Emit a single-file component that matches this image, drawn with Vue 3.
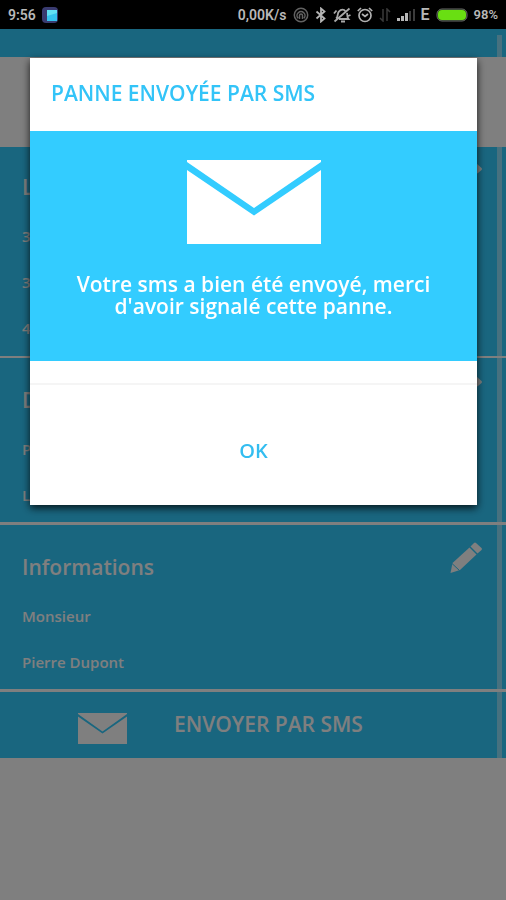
<script setup>
import { ref } from 'vue'

const open = ref(true)
const sections = [
  { title: 'L', rows: ['3', '3', '4'] },
  { title: 'D', rows: ['P', 'L'] },
  { title: 'Informations', rows: ['Monsieur', 'Pierre Dupont'] },
]
</script>

<template>
  <div class="screen">
    <header class="status">
      <span class="clock">9:56</span>
      <svg class="app" viewBox="0 0 16 16" width="16" height="16" aria-hidden="true">
        <rect width="16" height="16" rx="4" fill="#393b70" />
        <rect x="5" y="3" width="10" height="11" fill="#35c3ee" />
        <path d="M5 3h10v3L5 9z" fill="#62e1f3" />
      </svg>
      <span class="speed">0,00K/s</span>
      <svg viewBox="0 0 16 16" width="16" height="16" fill="none" stroke="#626262" stroke-width="1.500" aria-hidden="true">
        <circle cx="8" cy="8" r="6.700" />
        <path d="M5 11.200a4 4 0 1 1 6 0M6.500 12V8.500a1.500 1.500 0 0 1 3 0V12" />
      </svg>
      <svg viewBox="0 0 12 16" width="12" height="16" fill="none" stroke="#b5b5b5" stroke-width="1.800" aria-hidden="true">
        <path d="M1.500 4.500l8 7L6 14.500v-13l3.500 3-8 7" />
      </svg>
      <svg viewBox="0 0 18 16" width="18" height="16" fill="none" stroke="#a9a9a9" stroke-width="1.800" aria-hidden="true">
        <path d="M3 11.500c2.500-1.500 1-5 3-7C8 2 11 2 12.500 4.500M14 6c.5 2-.2 4 1.500 6H6M8 14.500h4M1.500 14.500L16.500 1.500M1 6.500l2.500-3M15 9l2.500-1" />
      </svg>
      <svg viewBox="0 0 16 16" width="16" height="16" fill="none" stroke="#b2b2b2" stroke-width="1.700" aria-hidden="true">
        <circle cx="8" cy="8.500" r="6" />
        <path d="M.8 4l3.200-3M15.200 4L12 1M5 7l3 2.500L11 7" />
      </svg>
      <svg viewBox="0 0 12 14" width="12" height="14" fill="none" stroke="#3a3a3a" stroke-width="1.500" aria-hidden="true">
        <path d="M4 1v12L1 10M8 13V1l3 3" />
      </svg>
      <svg viewBox="0 0 18 14" width="18" height="14" aria-hidden="true">
        <path d="M0 10h3v3H0zM4 8h3v5H4zM8 5h3v8H8z" fill="#b8b8b8" />
        <path d="M12 3h2v10h-2zM16 1h2v12h-2z" fill="#3c3c3c" />
      </svg>
      <span class="net">E</span>
      <svg viewBox="0 0 32 14" width="32" height="14" aria-hidden="true">
        <rect x="1" y="1" width="30" height="12" rx="5" fill="#15300a" stroke="#6c6c6c" />
        <rect x="2" y="2" width="28" height="10" rx="4" fill="#69df12" />
      </svg>
      <span class="level">98%</span>
    </header>

    <main class="page">
      <div class="toolbar"></div>
      <div class="banner"></div>
      <div class="content">
        <section v-for="s in sections" :key="s.title" class="card">
          <div class="head">
            <h2>{{ s.title }}</h2>
            <button class="edit" type="button" aria-label="Modifier">
              <svg viewBox="0 0 32 32" width="32" height="32" fill="#fff" aria-hidden="true">
                <path d="M.5 31L2.500 21 19.500 5.500 26.500 12.500 10 28z" />
                <path d="M20.500 4.500L24 1q1-.8 2 0L31.500 6q.8 1 0 2L27.500 11.500z" />
                <path d="M2 21.500L9.500 28.500" stroke="#33ccff" stroke-width="1" />
              </svg>
            </button>
          </div>
          <p v-for="(r, i) in s.rows" :key="i">{{ r }}</p>
        </section>
        <button class="send" type="button">
          <svg viewBox="0 0 49 31" width="49" height="31" fill="#fff" aria-hidden="true">
            <path d="M0 0h49v1L24.500 18.500 0 1zM0 3.500l24.500 17L49 3.500V31H0z" />
          </svg>
          <span>ENVOYER PAR SMS</span>
        </button>
      </div>
      <div class="scrollbar"></div>
    </main>

    <div v-if="open" class="overlay">
      <div class="dialog" role="dialog" aria-modal="true" aria-labelledby="dialog-title">
        <h1 id="dialog-title">PANNE ENVOYÉE PAR SMS</h1>
        <div class="message">
          <svg viewBox="0 0 134 84" width="134" height="84" fill="#fff" aria-hidden="true">
            <path d="M0 0h134v2L67 48 0 2zM0 10l67 45.500L134 10v74H0z" />
          </svg>
          <p>Votre sms a bien été envoyé, merci d'avoir signalé cette panne.</p>
        </div>
        <div class="actions">
          <button type="button" @click="open = false">OK</button>
        </div>
      </div>
    </div>
  </div>
</template>

<style>
body {
  margin: 0;
  background: #fff;
}
</style>

<style scoped>
.screen {
  min-height: 100vh;
  display: flex;
  flex-direction: column;
  font-family: "Open Sans", "Noto Sans", sans-serif;
}
button {
  border: 0;
  padding: 0;
  background: none;
  font: inherit;
  color: inherit;
  cursor: pointer;
}
h1, h2, p {
  margin: 0;
}
svg {
  display: block;
  flex: none;
}
.status {
  height: 29px;
  box-sizing: border-box;
  padding: 0 8px;
  display: flex;
  align-items: center;
  gap: 6px;
  background: #000;
  color: #b8b8b8;
  font: 600 14px/28px Roboto, sans-serif;
}
.speed {
  margin-left: auto;
}
.net {
  font-size: 16px;
}
.level {
  font-size: 13px;
}
.page {
  position: relative;
  flex: 1;
}
.toolbar {
  height: 28px;
  background: #33ccff;
}
.banner {
  height: 90px;
  background: #fff;
}
.card {
  padding: 15px 24px 5px 22px;
  background: #33ccff;
  color: #fff;
  border-bottom: 2px solid #fff;
}
.card + .card {
  padding-top: 17px;
  padding-bottom: 4px;
  border-bottom-width: 3px;
}
.head {
  display: flex;
  align-items: flex-start;
  justify-content: space-between;
  height: 51px;
}
h2 {
  font-size: 21px;
  line-height: 50px;
  font-weight: 600;
}
.card p {
  font-size: 15px;
  line-height: 46px;
  font-weight: 600;
}
.send {
  display: flex;
  align-items: flex-end;
  box-sizing: border-box;
  width: 100%;
  height: 66px;
  padding: 0 24px 14px 78px;
  gap: 47px;
  background: #33ccff;
  color: #fff;
  font-size: 21px;
  line-height: 40px;
  font-weight: 600;
}
.scrollbar {
  position: absolute;
  top: 6px;
  right: 4px;
  width: 5px;
  height: 723px;
  background: rgba(255, 255, 255, 0.45);
}
.overlay {
  position: fixed;
  inset: 29px 0 0;
  padding: 29px 29px 0 30px;
  background: rgba(0, 0, 0, 0.5);
}
.dialog {
  background: #fff;
  box-shadow: 0 3px 8px rgba(0, 0, 0, 0.8);
}
h1 {
  padding: 0 21px 3px;
  font-size: 21px;
  line-height: 70px;
  font-weight: 600;
  color: #33c4f8;
}
.message {
  display: flex;
  flex-direction: column;
  align-items: center;
  gap: 29px;
  padding: 29px 40px 44px;
  background: #33ccff;
  color: #fff;
  text-align: center;
  font-size: 21px;
  line-height: 22px;
  font-weight: 600;
}
.actions {
  margin-top: 22px;
  padding: 44px 0 32px;
  border-top: 2px solid #f5f5f5;
  display: flex;
  justify-content: center;
  font-size: 20px;
  line-height: 44px;
  font-weight: 600;
  color: #33bdf0;
}
</style>
